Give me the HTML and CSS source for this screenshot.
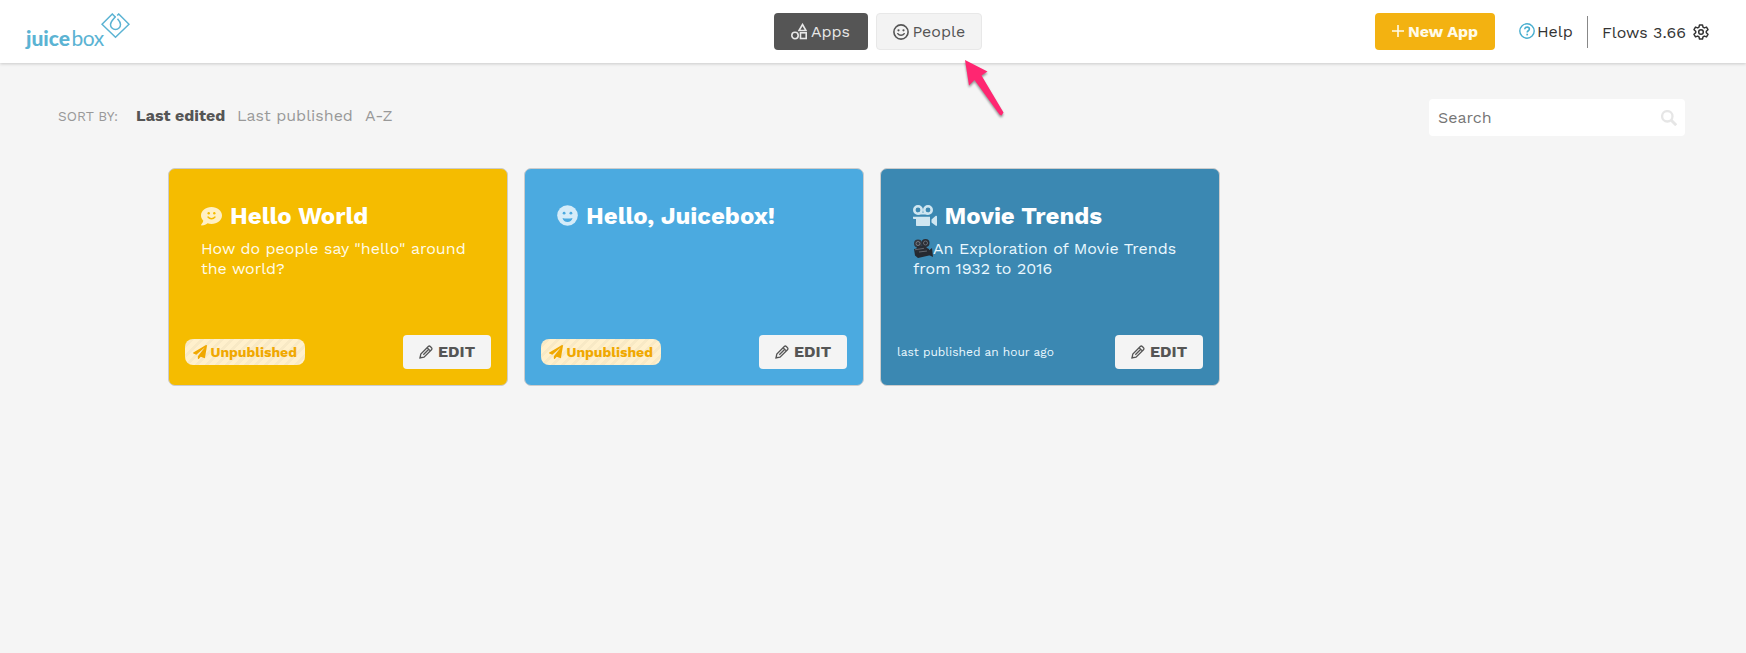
FILE: index.html
```
<!DOCTYPE html>
<html lang="en">
<head>
<meta charset="utf-8">
<title>Juicebox Apps</title>
<link rel="stylesheet" href="styles.css">
</head>
<body>
<svg class="defs" width="0" height="0" aria-hidden="true">
  <symbol id="pencil" viewBox="0 0 14 14"><path d="M1 13l.8-4L9.300 1.500c.6-.6 1.400-.6 2 0l1.200 1.200c.6.6.6 1.400 0 2L5 12.200 1 13zM8.100 2.700l3.200 3.200M4.300 9.700l5-5" fill="none" stroke="currentColor" stroke-width="1.300"/><path d="M.7 13.300l.5-2.500 2 2z" fill="currentColor"/></symbol>
  <symbol id="plane" viewBox="0 0 512 512"><path fill="currentColor" d="M476 3.200L12.500 270.600c-18.100 10.400-15.800 35.600 2.200 43.200L121 358.400l287.300-253.200c5.500-4.900 13.300 2.600 8.600 8.300L176 407v80.500c0 23.600 28.500 32.900 42.500 15.800L282 426l124.600 52.200c14.200 6 30.400-2.900 33-18.200l72-432C515 7.800 493.300-6.800 476 3.200z"/></symbol>
</svg>
<header class="topbar">
  <div class="logo"><span class="logo-bold">juice</span><span class="logo-light">box</span>
    <svg class="logo-mark" width="29" height="26" viewBox="0 0 29 26" fill="none" stroke="currentColor" stroke-width="1.500"><path d="M14.500 4.200L11.300 1 1 11.200 14.500 24.300 28 11.200 17.700 1l-1.500 1.500"/><path d="M14.500 3.500c-2.300 3-5 5-5 8a5 5 0 0 0 10 0c0-2.200-1.500-4-3-5.700"/></svg>
  </div>
  <nav class="tabs">
    <a class="tab tab-active"><svg width="16" height="17" viewBox="0 0 16 17" fill="none" stroke="currentColor" stroke-width="1.600"><path d="M11.500 1.500L15 7.500H8z"/><circle cx="4" cy="12.500" r="3.200"/><rect x="9.500" y="9.800" width="5.700" height="5.700"/></svg><span>Apps</span></a>
    <a class="tab"><svg width="16" height="16" viewBox="0 0 16 16"><circle cx="8" cy="8" r="7.100" fill="none" stroke="currentColor" stroke-width="1.600"/><circle cx="5.500" cy="6.300" r="1.100" fill="currentColor"/><circle cx="10.500" cy="6.300" r="1.100" fill="currentColor"/><path d="M4.800 9.700c1.500 2.200 4.900 2.200 6.400 0" fill="none" stroke="currentColor" stroke-width="1.500" stroke-linecap="round"/></svg><span>People</span></a>
  </nav>
  <div class="actions">
    <a class="new-app"><svg width="12" height="12" viewBox="0 0 12 12" stroke="currentColor" stroke-width="1.600"><path d="M6 0v12M0 6h12"/></svg><span>New App</span></a>
    <a class="help"><svg width="16" height="16" viewBox="0 0 16 16" fill="none" stroke="currentColor"><circle cx="8" cy="8" r="7.200" stroke-width="1.400"/><path d="M5.700 6.200c.2-2.800 4.700-2.700 4.700-.1 0 1.700-2.200 1.600-2.200 3.300" stroke-width="1.600"/><path d="M8.200 10.700v1.700" stroke-width="1.700"/></svg><span>Help</span></a>
    <a class="account"><span class="version">Flows 3.66</span><svg width="16" height="16" viewBox="0 0 16 16" fill="none" stroke="currentColor" stroke-width="1.500" stroke-linejoin="round"><path d="M6.500.9h3l.5 2.200 1.300.8 2.200-.8 1.500 2.600-1.700 1.500v1.600l1.700 1.500-1.500 2.600-2.200-.8-1.300.8-.5 2.200h-3L6 12.900l-1.300-.8-2.200.8L1 10.300l1.700-1.500V7.200L1 5.700l1.500-2.600 2.200.8L6 3.100z"/><circle cx="8" cy="8" r="2.300"/></svg></a>
  </div>
  <svg class="pointer" width="44" height="62" viewBox="0 0 44 62"><path d="M2 2L24.500 13.500 18.500 17.500 40.500 54.500 38.500 57.500 36.500 56.500 11.500 22 6 27.500z" fill="#ff2671"/></svg>
</header>
<main>
  <div class="toolbar">
    <div class="sort"><span class="sort-label">SORT BY:</span><a class="sort-on">Last edited</a><a class="sort-pub">Last published</a><a>A-Z</a></div>
    <label class="search"><input type="text" placeholder="Search"><svg width="16" height="16" viewBox="0 0 16 16" fill="none" stroke="#e6e6e6"><circle cx="6.300" cy="6.300" r="5.200" stroke-width="2.300"/><path d="M10 10l5.200 5.200" stroke-width="2.900"/></svg></label>
  </div>
  <section class="cards">
    <article class="card yellow">
      <h2><svg width="21" height="20" viewBox="0 0 21 20"><path d="M10.500 1C4.700 1 0 4.800 0 9.500c0 2 .9 3.800 2.300 5.300C1.900 16.700.2 18.600.2 18.600c-.3.400-.1.900.4.900 2.600 0 4.800-1.300 6-2.200 1.200.4 2.500.7 3.900.7C16.300 18 21 14.200 21 9.500S16.300 1 10.500 1z" fill="currentColor"/><g class="face"><circle cx="7.700" cy="7.300" r="1.200"/><circle cx="13.300" cy="7.300" r="1.200"/><path d="M7 11c1.800 2.300 5.200 2.300 7 0" fill="none" stroke="#f5bc00" stroke-width="1.400" stroke-linecap="round"/></g></svg><span>Hello World</span></h2>
      <p>How do people say "hello" around<br>the world?</p>
      <footer><span class="badge"><svg width="14" height="14"><use href="#plane"/></svg><span>Unpublished</span></span><a class="edit"><svg width="14" height="14"><use href="#pencil"/></svg><span>EDIT</span></a></footer>
    </article>
    <article class="card blue">
      <h2><svg width="21" height="21" viewBox="0 0 21 21"><circle cx="10.500" cy="10.500" r="10.300" fill="currentColor"/><g fill="#4baae0"><circle cx="7.100" cy="8.200" r="1.400"/><circle cx="13.900" cy="8.200" r="1.400"/><path d="M5.500 13c2.500.8 7.500.8 10 0-.6 2.600-2.500 4-5 4s-4.400-1.400-5-4z"/></g></svg><span>Hello, Juicebox!</span></h2>
      <footer><span class="badge"><svg width="14" height="14"><use href="#plane"/></svg><span>Unpublished</span></span><a class="edit"><svg width="14" height="14"><use href="#pencil"/></svg><span>EDIT</span></a></footer>
    </article>
    <article class="card deep">
      <h2><svg width="24" height="21" viewBox="0 0 24 21"><g fill="none" stroke="currentColor" stroke-width="2.600"><circle cx="5" cy="5" r="3.700"/><circle cx="15" cy="5" r="3.700"/></g><path d="M5 7.500h10v2H5zM0 11.700h17V20c0 .6-.4 1-1 1H4c-.6 0-1-.4-1-1v-6H1c-.6 0-1-.4-1-1zM18.500 14.500l4-3.500c.7-.5 1.500-.2 1.500.6V20c0 .9-.8 1.200-1.500.6l-4-3z" fill="currentColor"/></svg><span>Movie Trends</span></h2>
      <p><svg class="camera" width="20" height="20" viewBox="0 0 20 20"><path d="M1 10l11-2 4 2v6.500L5 19l-3-2.500zM15 12l4-3 1 9-5-2.500z" fill="#252930"/><circle cx="5" cy="4.500" r="4" fill="#343840"/><circle cx="12.500" cy="4" r="4" fill="#292d34"/><path d="M4 7l9-1 1 5-11 3z" fill="#292d34"/><circle cx="5" cy="4.500" r="2" fill="none" stroke="#777b82"/><circle cx="12.500" cy="4" r="2" fill="none" stroke="#686d75"/><path d="M2 10.800l9-1.500M6 13l8-1" stroke="#62666d" fill="none"/></svg>An Exploration of Movie Trends<br>from 1932 to 2016</p>
      <footer><span class="published">last published an hour ago</span><a class="edit"><svg width="14" height="14"><use href="#pencil"/></svg><span>EDIT</span></a></footer>
    </article>
  </section>
</main>
</body>
</html>
```
FILE: styles.css
```
* { box-sizing: border-box; }
body { margin: 0; background: #f5f5f5; color: #333; font: 16px "Work Sans", Inter, sans-serif; min-height: 653px; overflow: hidden; }
svg { flex: none; display: block; }
.defs { position: absolute; }
span, a, p { white-space: nowrap; }
.topbar { position: relative; height: 63px; background: #fff; box-shadow: 0 1px 3px rgba(0,0,0,.18); display: grid; grid-template-columns: 774px 208px 1fr; padding-top: 13px; }
.logo { display: flex; align-items: flex-start; color: #5bb3d3; padding-left: 26px; font-family: Lato, sans-serif; font-size: 21px; line-height: 26px; }
.logo span { margin-top: 12px; }
.logo-bold { font-weight: 900; width: 45.500px; }
.logo-light { width: 29.500px; letter-spacing: -.5px; }
.tabs { display: flex; gap: 8px; height: 37px; }
.tab { display: flex; align-items: center; width: 94px; padding-left: 17px; gap: 4px; border-radius: 4px; color: #555; background: #f3f3f3; }
.tab + .tab { width: 106px; border: 1px solid #e8e8e8; padding-left: 16px; gap: 3.500px; }
.tab-active { color: #e8e8e8; background: #555; }
.actions { display: flex; align-items: center; height: 37px; padding-left: 393px; }
.new-app { width: 120px; height: 37px; background: #f3b211; color: #fffbe9; border-radius: 4px; display: flex; align-items: center; gap: 4px; padding-left: 17px; font-weight: 700; }
.new-app svg { margin-top: -2px; }
.help { display: flex; align-items: center; gap: 2px; margin-left: 24px; width: 69px; height: 32px; border-right: 1px solid #888; }
.help svg { color: #48aecf; margin-top: -2px; }
.account { display: flex; align-items: center; margin-left: 14px; padding-top: 2px; }
.account svg { margin-top: -2px; }
.version { width: 91px; }
.pointer { position: absolute; left: 963px; top: 58px; filter: drop-shadow(0 2px 1px rgba(0,0,0,.4)); }
.toolbar { display: flex; justify-content: space-between; padding: 36px 61px 0 58px; height: 105px; }
.sort { display: flex; color: #999; line-height: 20px; padding-top: 7px; }
.sort-label { width: 78px; font-size: 13.600px; }
.sort-on { width: 101px; font-weight: 700; color: #555; }
.sort-pub { width: 128px; }
.search { width: 256px; height: 37px; background: #fff; border-radius: 4px; display: flex; align-items: center; padding: 0 8px 0 9px; }
.search input { width: 223px; padding: 0; border: 0; font: inherit; background: none; }
.search input::placeholder { color: #757575; }
.cards { display: flex; gap: 16px; padding-left: 168px; }
.card { width: 340px; height: 218px; border: 1px solid #ccc; border-radius: 7px; padding: 31px 16px 16px; display: flex; flex-direction: column; color: #fff; }
.yellow { background: #f5bc00; }
.blue { background: #4baae0; }
.deep { background: #3b88b2; }
.card h2 { display: flex; align-items: center; gap: 8px; height: 32px; margin: 0; padding-left: 16px; font-size: 24px; font-weight: 700; }
.card h2 svg { color: #fff0c5; margin-top: -1px; }
.blue h2 svg { color: #d5ecf9; }
.deep h2 svg { color: #cfe6f1; }
.deep h2 { gap: 7.500px; }
.face { fill: #f5bc00; }
.card p { margin: 7px 0 0; padding-left: 16px; line-height: 20px; color: #fffbea; }
.deep p { color: #eaf8ff; }
.camera { display: inline-block; height: 20px; vertical-align: top; }
.card footer { margin-top: auto; height: 34px; display: flex; align-items: center; justify-content: space-between; }
.badge { width: 120px; height: 26px; border-radius: 8px; display: flex; align-items: center; padding-left: 8px; gap: 3.500px; color: #f0a800; font-size: 14px; font-weight: 700; background: repeating-linear-gradient(135deg, #fff0cc 0 4px, #f8e9c5 4px 7px); }
.edit { width: 88px; height: 34px; border-radius: 4px; background: #f4f4f4; color: #555; display: flex; align-items: center; gap: 5px; padding: 0 0 1px 16px; font-weight: 700; }
.edit svg { margin-top: 1px; }
.published { font-size: 12px; color: #eaf8ff; }
```
